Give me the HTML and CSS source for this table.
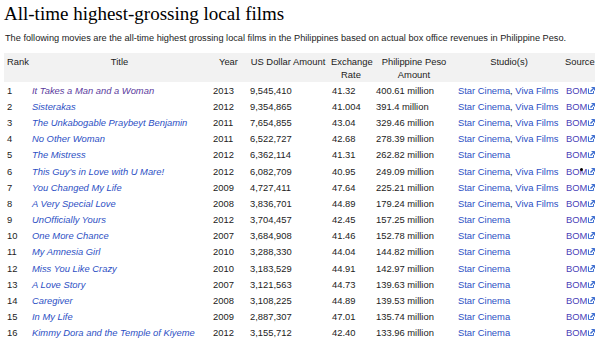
FILE: index.html
```html
<!DOCTYPE html>
<html lang="en">

<head>
    <meta charset="UTF-8">
    <title>All-time highest-grossing local films</title>
    <link rel="stylesheet" href="styles.css">
</head>

<body>
    <div class="page">
        <h2 class="heading">All-time highest-grossing local films</h2>
        <p class="intro">The following movies are the all-time highest grossing local films in the Philippines based on actual box office revenues in Philippine Peso.</p>

        <table class="films">
            <colgroup>
                <col class="c-rank">
                <col class="c-title">
                <col class="c-year">
                <col class="c-usd">
                <col class="c-rate">
                <col class="c-php">
                <col class="c-studio">
                <col class="c-source">
            </colgroup>
            <thead>
                <tr>
                    <th class="left">Rank</th>
                    <th>Title</th>
                    <th>Year</th>
                    <th class="nowrap">US Dollar Amount</th>
                    <th>Exchange Rate</th>
                    <th>Philippine Peso Amount</th>
                    <th>Studio(s)</th>
                    <th>Source</th>
                </tr>
            </thead>
            <tbody>
                <tr><td>1</td><td><a class="visited" href="#"><i>It Takes a Man and a Woman</i></a></td><td>2013</td><td>9,545,410</td><td>41.32</td><td>400.61 million</td><td><a href="#">Star Cinema</a>, <a href="#">Viva Films</a></td><td><a class="ext" href="#">BOM</a></td></tr>
                <tr><td>2</td><td><a href="#"><i>Sisterakas</i></a></td><td>2012</td><td>9,354,865</td><td>41.004</td><td>391.4 million</td><td><a href="#">Star Cinema</a>, <a href="#">Viva Films</a></td><td><a class="ext" href="#">BOM</a></td></tr>
                <tr><td>3</td><td><a href="#"><i>The Unkabogable Praybeyt Benjamin</i></a></td><td>2011</td><td>7,654,855</td><td>43.04</td><td>329.46 million</td><td><a href="#">Star Cinema</a>, <a href="#">Viva Films</a></td><td><a class="ext" href="#">BOM</a></td></tr>
                <tr><td>4</td><td><a href="#"><i>No Other Woman</i></a></td><td>2011</td><td>6,522,727</td><td>42.68</td><td>278.39 million</td><td><a href="#">Star Cinema</a>, <a href="#">Viva Films</a></td><td><a class="ext" href="#">BOM</a></td></tr>
                <tr><td>5</td><td><a href="#"><i>The Mistress</i></a></td><td>2012</td><td>6,362,114</td><td>41.31</td><td>262.82 million</td><td><a href="#">Star Cinema</a></td><td><a class="ext" href="#">BOM</a></td></tr>
                <tr><td>6</td><td><a href="#"><i>This Guy's in Love with U Mare!</i></a></td><td>2012</td><td>6,082,709</td><td>40.95</td><td>249.09 million</td><td><a href="#">Star Cinema</a>, <a href="#">Viva Films</a></td><td class="src"><a class="ext" href="#">BOM</a><span class="cursor"></span></td></tr>
                <tr><td>7</td><td><a href="#"><i>You Changed My Life</i></a></td><td>2009</td><td>4,727,411</td><td>47.64</td><td>225.21 million</td><td><a href="#">Star Cinema</a>, <a href="#">Viva Films</a></td><td><a class="ext" href="#">BOM</a></td></tr>
                <tr><td>8</td><td><a href="#"><i>A Very Special Love</i></a></td><td>2008</td><td>3,836,701</td><td>44.89</td><td>179.24 million</td><td><a href="#">Star Cinema</a>, <a href="#">Viva Films</a></td><td><a class="ext" href="#">BOM</a></td></tr>
                <tr><td>9</td><td><a href="#"><i>UnOfficially Yours</i></a></td><td>2012</td><td>3,704,457</td><td>42.45</td><td>157.25 million</td><td><a href="#">Star Cinema</a></td><td><a class="ext" href="#">BOM</a></td></tr>
                <tr><td>10</td><td><a href="#"><i>One More Chance</i></a></td><td>2007</td><td>3,684,908</td><td>41.46</td><td>152.78 million</td><td><a href="#">Star Cinema</a></td><td><a class="ext" href="#">BOM</a></td></tr>
                <tr><td>11</td><td><a href="#"><i>My Amnesia Girl</i></a></td><td>2010</td><td>3,288,330</td><td>44.04</td><td>144.82 million</td><td><a href="#">Star Cinema</a></td><td><a class="ext" href="#">BOM</a></td></tr>
                <tr><td>12</td><td><a href="#"><i>Miss You Like Crazy</i></a></td><td>2010</td><td>3,183,529</td><td>44.91</td><td>142.97 million</td><td><a href="#">Star Cinema</a></td><td><a class="ext" href="#">BOM</a></td></tr>
                <tr><td>13</td><td><a href="#"><i>A Love Story</i></a></td><td>2007</td><td>3,121,563</td><td>44.73</td><td>139.63 million</td><td><a href="#">Star Cinema</a></td><td><a class="ext" href="#">BOM</a></td></tr>
                <tr><td>14</td><td><a href="#"><i>Caregiver</i></a></td><td>2008</td><td>3,108,225</td><td>44.89</td><td>139.53 million</td><td><a href="#">Star Cinema</a></td><td><a class="ext" href="#">BOM</a></td></tr>
                <tr><td>15</td><td><a href="#"><i>In My Life</i></a></td><td>2009</td><td>2,887,307</td><td>47.01</td><td>135.74 million</td><td><a href="#">Star Cinema</a></td><td><a class="ext" href="#">BOM</a></td></tr>
                <tr><td>16</td><td><a href="#"><i>Kimmy Dora and the Temple of Kiyeme</i></a></td><td>2012</td><td>3,155,712</td><td>42.40</td><td>133.96 million</td><td><a href="#">Star Cinema</a></td><td><a class="ext" href="#">BOM</a></td></tr>
            </tbody>
        </table>
    </div>
</body>

</html>
```

FILE: styles.css
```css
body {
    margin: 0;
    background-color: white;
    color: #222;
    font-family: "Liberation Sans", Arial, sans-serif;
}

.page {
    padding: 2px 4px 0 4px;
}

.heading {
    margin: 0;
    font-family: "Liberation Serif", Georgia, serif;
    font-weight: normal;
    font-size: 19px;
    line-height: 24px;
    color: #000;
}

.intro {
    margin: 6px 1px 8px 1px;
    font-size: 9.2px;
    line-height: 13px;
}

.films {
    border-collapse: collapse;
    table-layout: fixed;
    width: 591px;
    font-size: 9.4px;
}

.c-rank { width: 25px; }
.c-title { width: 181px; }
.c-year { width: 37px; }
.c-usd { width: 82px; }
.c-rate { width: 44px; }
.c-php { width: 82px; }
.c-studio { width: 108px; }
.c-source { width: 32px; }

.films th {
    background-color: #f2f2f2;
    font-weight: normal;
    text-align: center;
    vertical-align: top;
    padding: 2px 2px 1px 2px;
    height: 26px;
    line-height: 13px;
}

.films th.left {
    text-align: left;
    padding-left: 3px;
}

.films th.nowrap {
    white-space: nowrap;
}

.films td {
    padding: 0 3px;
    height: 16.2px;
    line-height: 13px;
    white-space: nowrap;
    vertical-align: middle;
}

a {
    color: #2c4fc4;
    text-decoration: none;
}

a.visited {
    color: #5a3a9e;
}

a.ext {
    color: #4a3fb8;
}

a.ext::after {
    content: "";
    display: inline-block;
    width: 7px;
    height: 7px;
    margin-left: 1px;
    vertical-align: 0;
    background-image: url("data:image/svg+xml,%3Csvg xmlns='http://www.w3.org/2000/svg' width='7' height='7' viewBox='0 0 7 7'%3E%3Cpath d='M0.5 1.5v5h5v-2.5' fill='none' stroke='%233f6fd0' stroke-width='1'/%3E%3Cpath d='M3.5 0.5h3v3' fill='none' stroke='%233f6fd0' stroke-width='1'/%3E%3Cpath d='M6.5 0.5L2.5 4.5' fill='none' stroke='%233f6fd0' stroke-width='1.4'/%3E%3C/svg%3E");
}

.src {
    position: relative;
}

.cursor {
    position: absolute;
    left: 17px;
    top: 5px;
    width: 3px;
    height: 3px;
    border-radius: 50%;
    background-color: #000;
}
```
